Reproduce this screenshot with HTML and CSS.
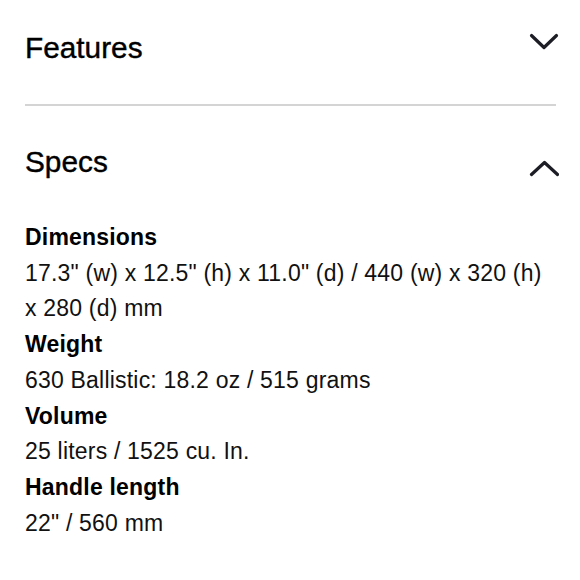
FILE: index.html
```html
<!DOCTYPE html>
<html lang="en">
<head>
<meta charset="utf-8">
<title>Product details</title>
<link rel="stylesheet" href="styles.css">
</head>
<body>
<main class="accordion">
  <section class="item">
    <div class="header">
      <h2 class="title">Features</h2>
      <svg class="chevron chevron-down" width="30" height="18" viewBox="0 0 30 18" aria-hidden="true">
        <path d="M2.5 3.5 L15 15.5 L27.5 3.5" fill="none" stroke="#1d1d26" stroke-width="3.2" stroke-linecap="round" stroke-linejoin="round"/>
      </svg>
    </div>
  </section>
  <div class="divider"></div>
  <section class="item open">
    <div class="header">
      <h2 class="title">Specs</h2>
      <svg class="chevron chevron-up" width="30" height="18" viewBox="0 0 30 18" aria-hidden="true">
        <path d="M2.5 15.5 L15.5 3.5 L28.5 15.5" fill="none" stroke="#1d1d26" stroke-width="3.2" stroke-linecap="round" stroke-linejoin="round"/>
      </svg>
    </div>
    <dl class="specs">
      <dt>Dimensions</dt>
      <dd>17.3" (w) x 12.5" (h) x 11.0" (d) / 440 (w) x 320 (h) x 280 (d) mm</dd>
      <dt>Weight</dt>
      <dd>630 Ballistic: 18.2 oz / 515 grams</dd>
      <dt>Volume</dt>
      <dd>25 liters / 1525 cu. In.</dd>
      <dt>Handle length</dt>
      <dd>22" / 560 mm</dd>
    </dl>
  </section>
</main>
</body>
</html>
```

FILE: styles.css
```css
html, body {
  margin: 0;
  padding: 0;
  background: #ffffff;
}

body {
  font-family: "Liberation Sans", Arial, Helvetica, sans-serif;
  color: #111111;
}

.accordion {
  padding: 30px 24px 0 25px;
}

.header {
  display: flex;
  justify-content: space-between;
  align-items: flex-start;
  height: 36px;
}

.title {
  margin: 0;
  font-size: 29.8px;
  line-height: 36px;
  font-weight: 400;
  color: #000000;
  -webkit-text-stroke: 0.4px #000000;
}

.chevron {
  display: block;
  margin-right: -3px;
}

.chevron-down {
  margin-top: 2px;
}

.chevron-up {
  margin-top: 15px;
}

.divider {
  height: 2px;
  background: #d4d4d4;
  margin: 38px 0;
}

.specs {
  margin: 40px 0 0 0;
  font-size: 23px;
  line-height: 35.7px;
  letter-spacing: 0.2px;
}

.specs dt {
  font-weight: 700;
  color: #000000;
}

.specs dd {
  margin: 0;
}
```
